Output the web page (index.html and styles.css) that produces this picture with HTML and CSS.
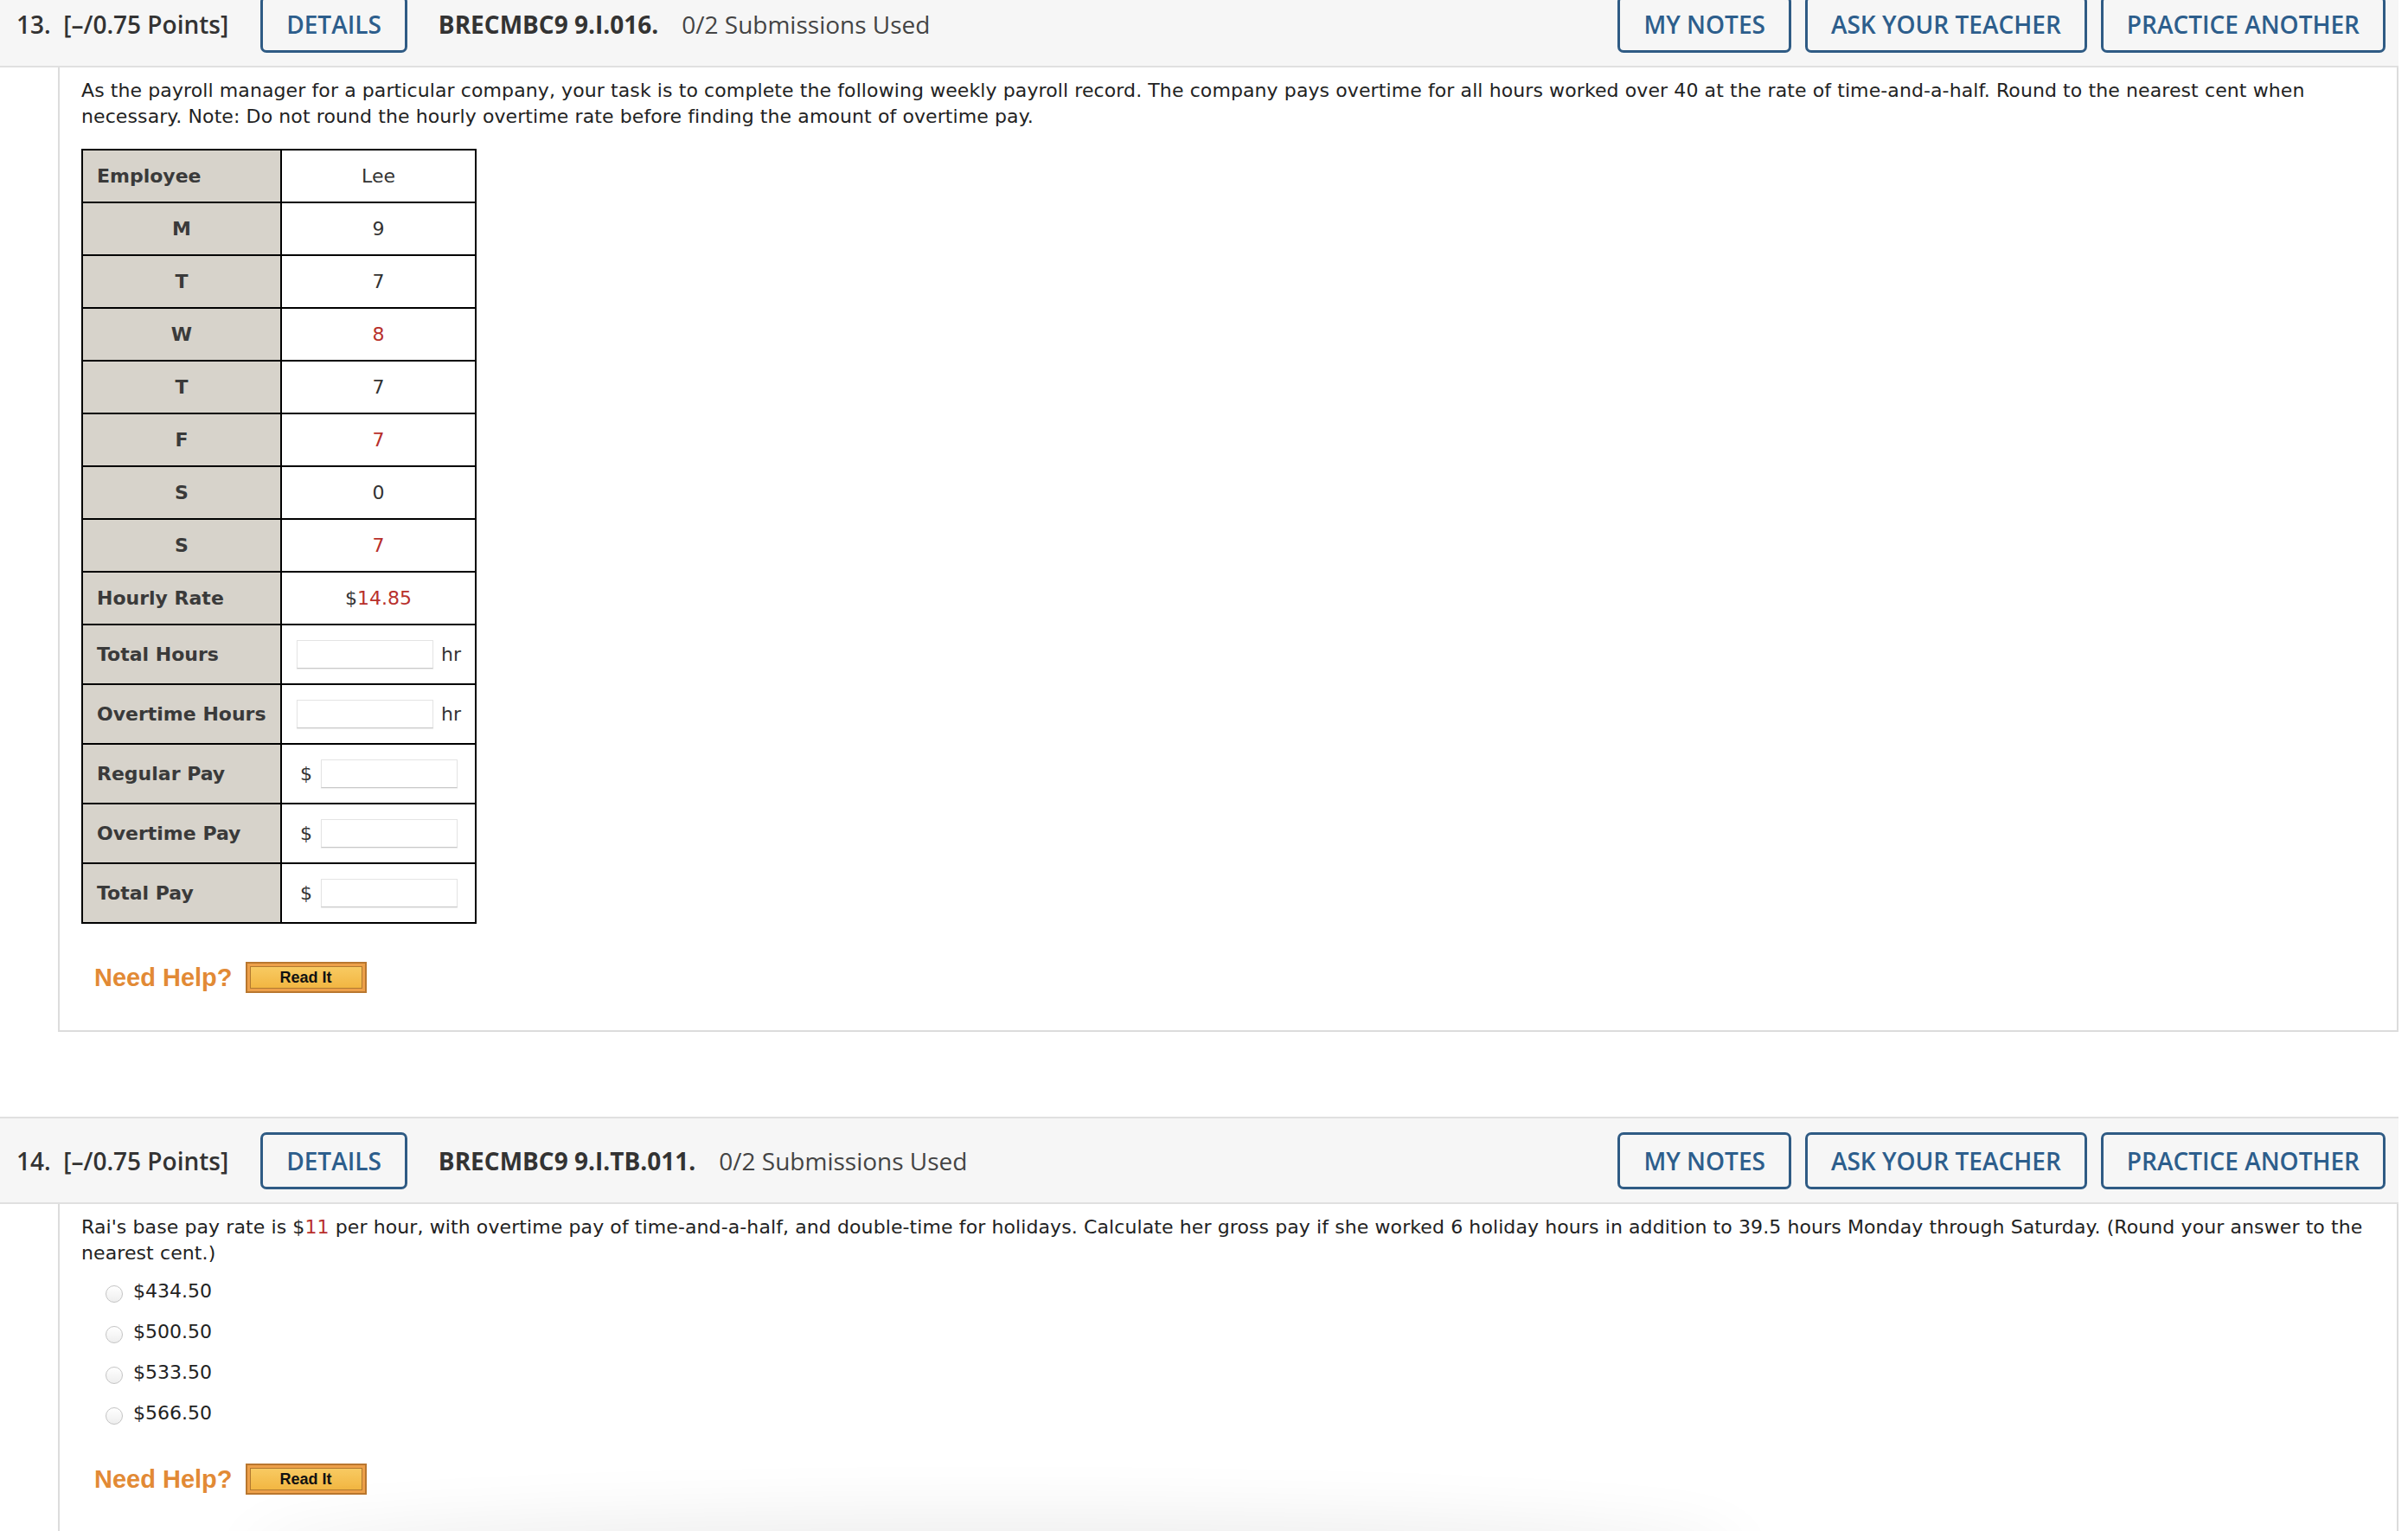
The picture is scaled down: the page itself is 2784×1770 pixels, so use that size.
FILE: index.html
```html
<!DOCTYPE html>
<html>
  <head>
    <title>Assignment</title>
    <link rel="stylesheet" href="styles.css">
  </head>
  <body>
    <div class="page">
      <div class="question">
        <div class="q-header">
          <span class="q-num">13.&nbsp; [–/0.75 Points]</span>
          <button class="q-btn">DETAILS</button>
          <span class="q-code">BRECMBC9 9.I.016.</span>
          <span class="q-subs">0/2 Submissions Used</span>
          <div class="q-actions">
            <button class="q-btn">MY NOTES</button>
            <button class="q-btn">ASK YOUR TEACHER</button>
            <button class="q-btn">PRACTICE ANOTHER</button>
          </div>
        </div>

        <div class="q-body">
          <p class="q-text">As the payroll manager for a particular company, your task is to complete the following weekly payroll record. The company pays overtime for all hours worked over 40 at the rate of time-and-a-half. Round to the nearest cent when necessary. Note: Do not round the hourly overtime rate before finding the amount of overtime pay.</p>

          <table class="payroll">
            <colgroup>
              <col class="col-label">
              <col class="col-value">
            </colgroup>
            <tr><td class="label">Employee</td><td class="value">Lee</td></tr>
            <tr><td class="label day">M</td><td class="value">9</td></tr>
            <tr><td class="label day">T</td><td class="value">7</td></tr>
            <tr><td class="label day">W</td><td class="value red">8</td></tr>
            <tr><td class="label day">T</td><td class="value">7</td></tr>
            <tr><td class="label day">F</td><td class="value red">7</td></tr>
            <tr><td class="label day">S</td><td class="value">0</td></tr>
            <tr><td class="label day">S</td><td class="value red">7</td></tr>
            <tr><td class="label">Hourly Rate</td><td class="value">$<span class="red">14.85</span></td></tr>
            <tr>
              <td class="label">Total Hours</td>
              <td class="entry"><div class="field"><input class="answer" type="text"><span class="unit">hr</span></div></td>
            </tr>
            <tr>
              <td class="label">Overtime Hours</td>
              <td class="entry"><div class="field"><input class="answer" type="text"><span class="unit">hr</span></div></td>
            </tr>
            <tr>
              <td class="label">Regular Pay</td>
              <td class="entry money"><div class="field"><span class="cur">$</span><input class="answer" type="text"></div></td>
            </tr>
            <tr>
              <td class="label">Overtime Pay</td>
              <td class="entry money"><div class="field"><span class="cur">$</span><input class="answer" type="text"></div></td>
            </tr>
            <tr>
              <td class="label">Total Pay</td>
              <td class="entry money"><div class="field"><span class="cur">$</span><input class="answer" type="text"></div></td>
            </tr>
          </table>

          <div class="help help-table">
            <span class="help-label">Need Help?</span>
            <button class="read-it"><span>Read It</span></button>
          </div>
        </div>
      </div>

      <div class="question">
        <div class="q-header">
          <span class="q-num">14.&nbsp; [–/0.75 Points]</span>
          <button class="q-btn">DETAILS</button>
          <span class="q-code">BRECMBC9 9.I.TB.011.</span>
          <span class="q-subs">0/2 Submissions Used</span>
          <div class="q-actions">
            <button class="q-btn">MY NOTES</button>
            <button class="q-btn">ASK YOUR TEACHER</button>
            <button class="q-btn">PRACTICE ANOTHER</button>
          </div>
        </div>

        <div class="q-body q-body-last">
          <p class="q-text">Rai's base pay rate is $<span class="red">11</span> per hour, with overtime pay of time-and-a-half, and double-time for holidays. Calculate her gross pay if she worked 6 holiday hours in addition to 39.5 hours Monday through Saturday. (Round your answer to the nearest cent.)</p>

          <ul class="choices">
            <li><label><input type="radio" name="q14"> $434.50</label></li>
            <li><label><input type="radio" name="q14"> $500.50</label></li>
            <li><label><input type="radio" name="q14"> $533.50</label></li>
            <li><label><input type="radio" name="q14"> $566.50</label></li>
          </ul>

          <div class="help help-choices">
            <span class="help-label">Need Help?</span>
            <button class="read-it"><span>Read It</span></button>
          </div>
        </div>
      </div>
    </div>

    <div class="bottom-fade"></div>
  </body>
</html>
```

FILE: styles.css
```css
body {
  margin: 0 11px 0 0;
  font-family: "DejaVu Sans", Verdana, sans-serif;
  font-size: 22px;
  color: #222;
  background: #fff;
  overflow: hidden;
}
.page {
  margin-top: -23px;
}
.question + .question {
  margin-top: 98px;
}
.q-header {
  display: flex;
  align-items: center;
  height: 66px;
  padding: 16px 15px 15px 19px;
  background: #f6f6f6;
  border-top: 2px solid #e0e0e0;
  border-bottom: 2px solid #e0e0e0;
  font-family: "Open Sans", sans-serif;
  font-size: 28px;
  color: #333;
}
.q-num {
  font-weight: 600;
  margin-right: 37px;
}
.q-code {
  font-weight: 700;
  margin-left: 36px;
}
.q-subs {
  margin-left: 27px;
  color: #444;
}
.q-actions {
  margin-left: auto;
  display: flex;
  gap: 16px;
}
.q-btn {
  height: 66px;
  padding: 0 27px;
  background: #f6f6f6;
  border: 3px solid #2f5b84;
  border-radius: 7px;
  font-family: "Open Sans", sans-serif;
  font-size: 28px;
  font-weight: 600;
  color: #2d5e8c;
}
.q-body {
  margin-left: 67px;
  padding: 12px 12px 43px 25px;
  border: 2px solid #dcdcdc;
  border-top: none;
}
.q-body-last {
  min-height: 600px;
}
.q-text {
  margin: 0;
  line-height: 30px;
  letter-spacing: 0.1px;
}
.red {
  color: #b8302c;
}

/* payroll table */
.payroll {
  margin-top: 22px;
  border-collapse: collapse;
  table-layout: fixed;
  width: 455px;
  color: #333;
}
.col-label {
  width: 230px;
}
.col-value {
  width: 225px;
}
.payroll td {
  border: 2px solid #000;
  padding: 17px 16px;
  line-height: 25px;
}
.label {
  background: #d7d3cb;
  font-weight: bold;
  color: #3a3a3a;
  padding-left: 17px;
}
.label.day {
  text-align: center;
}
.value {
  text-align: center;
}
.payroll td.entry {
  padding: 17px 6px 17px 17px;
}
.field {
  display: flex;
  align-items: center;
  height: 33px;
  gap: 9px;
}
.entry.money .field {
  padding-left: 4px;
  gap: 10px;
}
.answer {
  width: 158px;
  height: 33px;
  box-sizing: border-box;
  margin: 0;
  border: 1px solid #e4e4e4;
  border-bottom-color: #c8c8c8;
  box-shadow: 0 1px 1px rgba(0, 0, 0, 0.06);
  background: #fff;
}
.unit,
.cur {
  color: #333;
}

/* multiple choice */
.choices {
  list-style: none;
  margin: 5px 0 0;
  padding: 0 0 0 28px;
}
.choices li {
  height: 47px;
  line-height: 47px;
}
.choices label {
  display: flex;
  align-items: center;
  gap: 12px;
}
.choices input {
  appearance: none;
  width: 20px;
  height: 20px;
  margin: 6px 0 0;
  border: 1px solid #c4c4c4;
  border-radius: 50%;
  background: linear-gradient(#fff, #eee);
}

/* help row */
.help {
  display: flex;
  align-items: center;
  gap: 15px;
  padding-left: 15px;
}
.help-table {
  margin-top: 44px;
}
.help-choices {
  margin-top: 35px;
}
.help-label {
  font-family: "Liberation Sans", Arial, sans-serif;
  font-weight: bold;
  font-size: 29px;
  color: #e28a35;
}
.read-it {
  display: flex;
  width: 140px;
  height: 36px;
  padding: 3px;
  box-sizing: border-box;
  background: #eda04a;
  border: 2px solid #b9772f;
}
.read-it span {
  flex: 1;
  display: flex;
  align-items: center;
  justify-content: center;
  border: 1px solid #b2792f;
  background: linear-gradient(#f8ca62, #f2b642);
  font-family: "Liberation Sans", Arial, sans-serif;
  font-weight: bold;
  font-size: 18px;
  color: #111;
}

.bottom-fade {
  position: fixed;
  left: 300px;
  width: 1700px;
  bottom: -50px;
  height: 50px;
  border-radius: 50%;
  box-shadow: 0 0 70px 20px rgba(0, 0, 0, 0.07);
}
```
